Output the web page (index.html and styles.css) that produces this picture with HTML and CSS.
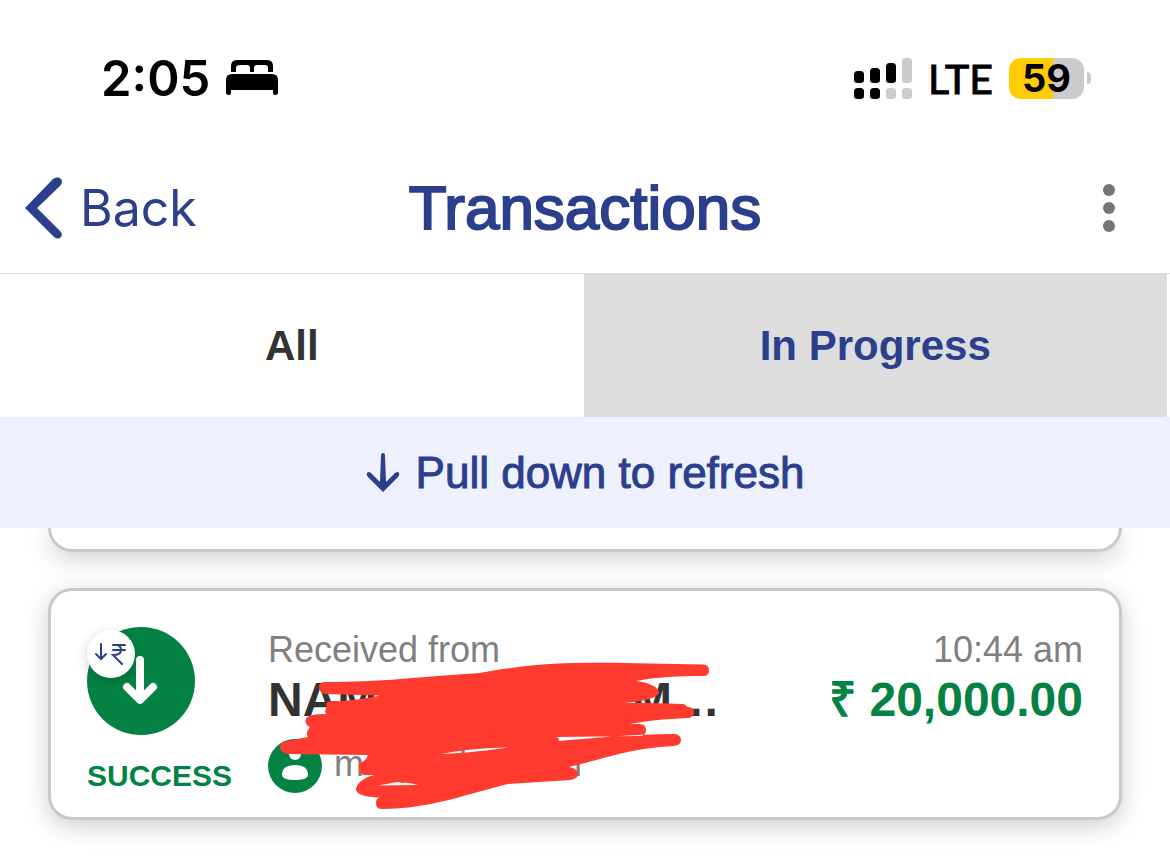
FILE: index.html
```html
<!DOCTYPE html>
<html lang="en">
<head>
    <meta charset="UTF-8">
    <meta name="viewport" content="width=device-width, initial-scale=1.0">
    <title>Transactions</title>
    <link rel="stylesheet" href="styles.css">
</head>
<body>
    <div class="status-bar">
        <div class="status-left">
            <span class="clock">2:05</span>
            <svg width="52" height="36" viewBox="0 0 52 36" aria-hidden="true">
                <path d="M5 12V6Q5 0 11 0H41Q47 0 47 6V12H42V8Q42 5 39 5H31Q28 5 28 8V12H24V8Q24 5 21 5H14Q10 5 10 8V12Z"/>
                <path d="M6 14H46Q52 14 52 20V33Q52 35 49.500 35Q47 35 47 33V30H5V33Q5 35 2.500 35Q0 35 0 33V20Q0 14 6 14Z"/>
            </svg>
        </div>
        <div class="status-right">
            <svg width="58" height="41" viewBox="0 0 58 41" aria-hidden="true">
                <rect x="0" y="13" width="10" height="12" rx="3.500"/>
                <rect x="16" y="10" width="10" height="15" rx="3.500"/>
                <rect x="32" y="5" width="10" height="20" rx="3.500"/>
                <rect x="48" y="0" width="10" height="25" rx="3.500" fill="#cbcbcb"/>
                <rect x="0" y="30" width="10" height="11" rx="3.500"/>
                <rect x="16" y="30" width="10" height="11" rx="3.500"/>
                <rect x="32" y="30" width="10" height="11" rx="3.500" fill="#cbcbcb"/>
                <rect x="48" y="30" width="10" height="11" rx="3.500" fill="#cbcbcb"/>
            </svg>
            <span class="network">LTE</span>
            <div class="battery">
                <span class="battery-level">59</span>
                <span class="battery-cap"></span>
            </div>
        </div>
    </div>

    <header class="header">
        <a href="#" class="back">
            <svg width="37" height="62" viewBox="0 0 37 62" aria-hidden="true">
                <path d="M32 0.500Q36 0 37 4Q37 7 35 9L12 31L35 54Q38 57 36 60Q33 63 29 60L0 31L28 2Q30 0.500 32 0.500Z" fill="#2b3f8c"/>
            </svg>
            <span>Back</span>
        </a>
        <h1>Transactions</h1>
        <button class="menu" aria-label="More options">
            <svg width="12" height="48" viewBox="0 0 12 48" fill="#757575">
                <circle cx="6" cy="6" r="6"/>
                <circle cx="6" cy="24" r="6"/>
                <circle cx="6" cy="42" r="6"/>
            </svg>
        </button>
    </header>

    <nav class="tabs">
        <button class="tab active">All</button>
        <button class="tab">In Progress</button>
    </nav>

    <div class="refresh">
        <svg width="34" height="40" viewBox="0 0 34 40" fill="#2b3f8c" aria-hidden="true">
            <path d="M15 3Q15 0 17 0Q19 0 19 3L20 29L29 20Q32 18 33 20Q34 22 32 24L17 39L2 24Q0 22 1 20Q3 18 5 20L14 29Z"/>
        </svg>
        <span>Pull down to refresh</span>
    </div>

    <main class="list">
        <div class="card card-cut"></div>

        <article class="card">
            <div class="state">
                <div class="state-icon">
                    <svg width="108" height="108" viewBox="0 0 108 108" aria-hidden="true">
                        <circle cx="54" cy="54" r="54" fill="#048243"/>
                        <path d="M53 33V72M40 60L53 73L66 60" fill="none" stroke="#fff" stroke-width="8" stroke-linecap="round" stroke-linejoin="round"/>
                    </svg>
                    <span class="badge">
                        <svg width="32" height="24" viewBox="0 0 32 24" fill="none" stroke="#2b3f8c" stroke-width="2" stroke-linecap="round" aria-hidden="true">
                            <path d="M6 2V16M1 12L6 17L11 12"/>
                            <path d="M18 3H30M18 8H30M18 3H21Q26 3 26 8Q26 13 18 13L27 22"/>
                        </svg>
                    </span>
                </div>
                <span class="state-text">SUCCESS</span>
            </div>

            <div class="details">
                <div class="label">Received from</div>
                <div class="name"><span>NAM</span><span>M…</span></div>
                <div class="account">
                    <svg width="54" height="54" viewBox="0 0 54 54" aria-hidden="true">
                        <circle cx="27" cy="27" r="27" fill="#048243"/>
                        <circle cx="27" cy="15" r="6" fill="#fff"/>
                        <path d="M14 36Q14 26 27 26Q40 26 40 36Q40 41 27 41Q14 41 14 36Z" fill="#fff"/>
                    </svg>
                    <div class="account-id"><span>m</span><span>l</span><span>n</span></div>
                </div>
                <!-- marker strokes hiding the payer -->
                <svg class="scribble" width="452" height="182" viewBox="268 627 452 182" fill="#ff3b30" aria-hidden="true">
                    <path fill-rule="evenodd" d="M326 682C380 682 420 677 480 673C510 668 530 664 575 663C620 662 655 664 703 664.500Q709 665 709 670.500Q709 676 703 676C680 676 655 677 636 681C650 683 658 687 659 692C658 698 645 701 625 703C645 703 665 703 682 704Q686 704 687 707Q694 707 694 712Q694 718 687 718C665 719 645 721 630 724H639Q646 724 646 730Q646 736 639 736L557 737Q559 739 559 741C595 738 630 734 675 734Q681 735 681 740Q681 745 674 746C630 748 600 760 569 767L573 768Q578 770 578 775Q577 779 570 780L508 784C470 793 430 809 382 809Q376 809 376 803Q376 798 380 797.500C366 797 356 795 356 789C357 782 366 777 374 775H364Q359 774 359 768Q358 763 364 761Q367 758 368 755L288 754Q281 753 280 747Q280 742 287 741L308 737Q305 732 310 727Q304 724 306 719Q307 714 326 714Q324 710 327 707Q324 702 331 701C350 701 365 699 380 695.500L326 694Q319 693 319 687Q319 682 326 682ZM378 785.500C388 784 398 781 402 783C409 782 412 784 418 785ZM440 754C457 751 478 748 508 747.500C490 750 468 753 440 754Z"/>
                </svg>
            </div>

            <div class="amount-box">
                <div class="label">10:44 am</div>
                <div class="amount">₹ 20,000.00</div>
            </div>
        </article>
    </main>
</body>
</html>
```
FILE: styles.css
```css
:root {
    --blue: #2b3f8c;
    --green: #048243;
    --grey: #808080;
    --dark: #333;
    --border: #c9c9c9;
}

* {
    margin: 0;
    padding: 0;
    box-sizing: border-box;
}

body {
    background: #fff;
    font-family: "Liberation Sans", Arial, sans-serif;
    overflow-x: hidden;
}

svg {
    display: block;
    flex: none;
}

button {
    border: none;
    background: none;
    font-family: inherit;
    cursor: pointer;
}

.status-bar {
    display: flex;
    justify-content: space-between;
    align-items: center;
    padding: 48px 79px 0 101px;
}

.status-left,
.status-right {
    display: flex;
    align-items: center;
    gap: 16px;
    height: 60px;
}

.clock {
    font-family: Inter, sans-serif;
    font-size: 49px;
    font-weight: 600;
}

.network {
    font-family: Lato, sans-serif;
    font-size: 41px;
    -webkit-text-stroke: 1px #000;
}

.battery {
    display: flex;
    align-items: center;
    gap: 3px;
}

.battery-level {
    width: 75px;
    border-radius: 12px;
    background: linear-gradient(90deg, #fc0 59%, #cbcbcb 59%);
    font-family: Inter, sans-serif;
    font-size: 38px;
    font-weight: 700;
    line-height: 41px;
    text-align: center;
}

.battery-cap {
    width: 4px;
    height: 12px;
    border-radius: 0 6px 6px 0;
    background: #cbcbcb;
}

.header {
    display: grid;
    grid-template-columns: 1fr auto 1fr;
    align-items: center;
    height: 166px;
    padding: 34px 25px 0;
    border-bottom: 1px solid #d8d8d8;
}

.back {
    display: flex;
    align-items: center;
    gap: 18px;
    color: var(--blue);
    font-family: Inter, sans-serif;
    font-size: 50px;
    text-decoration: none;
}

h1 {
    color: var(--blue);
    font-size: 62px;
    font-weight: 400;
    -webkit-text-stroke: 2px var(--blue);
}

.menu {
    justify-self: end;
    margin-right: 30px;
}

.tabs {
    display: flex;
    padding-right: 3px;
}

.tab {
    flex: 1;
    height: 143px;
    background: #ddd;
    color: var(--blue);
    font-size: 42px;
    font-weight: 700;
}

.tab.active {
    background: #fff;
    color: var(--dark);
}

.refresh {
    display: flex;
    justify-content: center;
    align-items: center;
    gap: 16px;
    height: 111px;
    background: #eef1fd;
    color: var(--blue);
    font-size: 44px;
    -webkit-text-stroke: 1px var(--blue);
}

.list {
    display: flex;
    flex-direction: column;
    gap: 36px;
    padding: 0 48px 42px;
    overflow: hidden;
}

.card {
    display: flex;
    padding: 36px 36px 24px;
    border: 3px solid var(--border);
    border-radius: 24px;
    background: #fff;
    box-shadow: 0 6px 24px rgba(0, 0, 0, 0.2);
}

.card-cut {
    height: 24px;
    padding: 0;
    border-top: none;
    border-radius: 0 0 24px 24px;
}

.state {
    display: flex;
    flex-direction: column;
    gap: 24px;
    width: 181px;
}

.state-icon {
    position: relative;
}

.badge {
    position: absolute;
    top: 3px;
    left: 0;
    display: flex;
    justify-content: center;
    align-items: center;
    width: 48px;
    height: 48px;
    border-radius: 50%;
    background: #fff;
    box-shadow: 0 3px 12px rgba(0, 0, 0, 0.2);
}

.state-text {
    color: var(--green);
    font-size: 30px;
    font-weight: 700;
    line-height: 34px;
}

.details {
    position: relative;
    width: 452px;
}

.label {
    color: var(--grey);
    font-size: 36px;
    line-height: 46px;
}

.name {
    display: flex;
    justify-content: space-between;
    color: var(--dark);
    font-size: 48px;
    font-weight: 700;
    line-height: 54px;
}

.account {
    display: flex;
    align-items: flex-start;
    gap: 12px;
    margin-top: 12px;
}

.account-id {
    display: flex;
    justify-content: space-between;
    width: 248px;
    color: var(--grey);
    font-size: 36px;
    line-height: 50px;
}

.scribble {
    position: absolute;
    top: 0;
    left: 0;
}

.amount-box {
    flex: 1;
    text-align: right;
}

.amount {
    color: var(--green);
    font-size: 48px;
    font-weight: 700;
    line-height: 54px;
}
```
